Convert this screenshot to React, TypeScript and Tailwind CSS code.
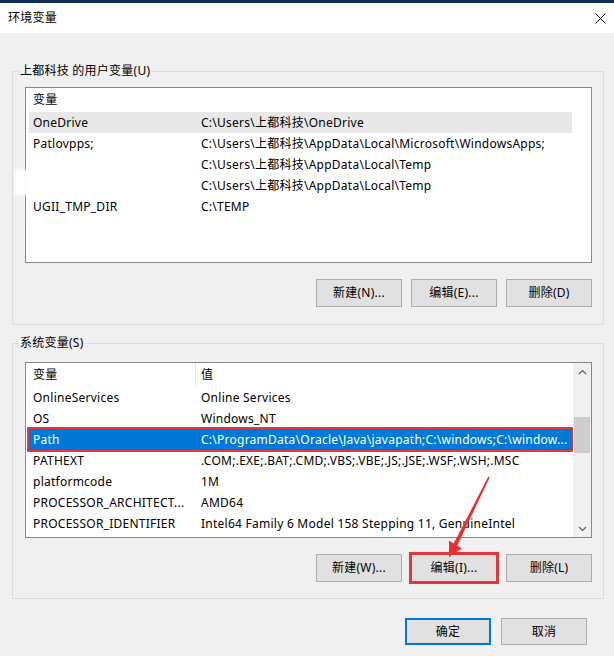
import { ReactNode } from 'react'

type Row = { name: string; value: string; hover?: boolean; selected?: boolean }

const userRows: Row[] = [
  { name: 'OneDrive', value: 'C:\\Users\\上都科技\\OneDrive', hover: true },
  { name: 'Patlovpps;', value: 'C:\\Users\\上都科技\\AppData\\Local\\Microsoft\\WindowsApps;' },
  { name: '', value: 'C:\\Users\\上都科技\\AppData\\Local\\Temp' },
  { name: '', value: 'C:\\Users\\上都科技\\AppData\\Local\\Temp' },
  { name: 'UGII_TMP_DIR', value: 'C:\\TEMP' },
]

const systemRows: Row[] = [
  { name: 'OnlineServices', value: 'Online Services' },
  { name: 'OS', value: 'Windows_NT' },
  { name: 'Path', value: 'C:\\ProgramData\\Oracle\\Java\\javapath;C:\\windows;C:\\window...', selected: true },
  { name: 'PATHEXT', value: '.COM;.EXE;.BAT;.CMD;.VBS;.VBE;.JS;.JSE;.WSF;.WSH;.MSC' },
  { name: 'platformcode', value: '1M' },
  { name: 'PROCESSOR_ARCHITECT...', value: 'AMD64' },
  { name: 'PROCESSOR_IDENTIFIER', value: 'Intel64 Family 6 Model 158 Stepping 11, GenuineIntel' },
]

function Chevron({ up }: { up?: boolean }) {
  return (
    <svg width="9" height="6" viewBox="0 0 9 6" fill="none">
      <path d={up ? 'M1 5L4.5 1.5L8 5' : 'M1 1L4.5 4.5L8 1'} stroke="#606060" strokeWidth="1.2" />
    </svg>
  )
}

function ListView({ rows, valueHeader, scrollbar }: { rows: Row[]; valueHeader?: boolean; scrollbar?: boolean }) {
  return (
    <div className="flex h-[176px] w-[567px] border border-[#828790] bg-white">
      <div className="flex w-[547px] flex-col">
        {/* header */}
        <div className="flex h-[24px] items-center">
          <div className={`flex h-full w-[170px] items-center pl-[7px] ${valueHeader ? 'border-r border-[#e5e5e5]' : ''}`}>变量</div>
          {valueHeader && <div className="pl-[5px]">值</div>}
        </div>
        {rows.map((r, i) => (
          <div
            key={i}
            className={`ml-[3px] flex h-[21px] w-[543px] items-center whitespace-nowrap ${
              r.selected ? 'bg-[#0078d7] text-white outline-2 outline-[#e0383d]' : r.hover ? 'bg-[#e8e8e8]' : ''
            }`}
          >
            <div className="w-[166px] pl-[4px]">{r.name}</div>
            <div className="pl-[6px]">{r.value}</div>
          </div>
        ))}
      </div>
      {scrollbar ? (
        <div className="flex w-[18px] flex-col bg-[#f0f0f0]">
          <div className="flex h-[17px] items-center justify-center"><Chevron up /></div>
          <div className="flex-1 px-[1px] pt-[37px]">
            <div className="h-[36px] bg-[#cdcdcd]" />
          </div>
          <div className="flex h-[17px] items-center justify-center"><Chevron /></div>
        </div>
      ) : (
        <div className="w-[18px]" />
      )}
    </div>
  )
}

function Btn({ children, red }: { children: ReactNode; red?: boolean }) {
  return (
    <button
      className={`flex h-[28px] w-[86px] items-center justify-center border border-[#adadad] bg-[#e1e1e1] ${
        red ? 'outline-[3px] outline-offset-[-1px] outline-[#e0383d]' : ''
      }`}
    >
      {children}
    </button>
  )
}

function Group({ label, children, top, legendGap, bottomPad }: { label: string; children: ReactNode; top: string; legendGap: string; bottomPad: string }) {
  return (
    <fieldset className={`ml-[12px] w-[592px] border border-[#dcdcdc] ${top}`}>
      <legend className="ml-[6px] h-[16px] px-[1px] leading-[16px]">{label}</legend>
      <div className={`flex flex-col gap-[16px] pl-[12px] pr-[11px] ${legendGap} ${bottomPad}`}>{children}</div>
    </fieldset>
  )
}

export default function App() {
  return (
    <div className="relative h-[656px] w-[614px] overflow-hidden bg-[#f0f0f0] font-['Noto_Sans','Noto_Sans_CJK_SC',sans-serif] text-[12px] tracking-[0.25px] text-black">
      <div className="h-[3px] bg-[#0f2d52]" />
      <div className="flex h-[30px] items-center justify-between bg-white pl-[8px] pr-[8px]">
        <span>环境变量</span>
        <svg width="11" height="11" viewBox="0 0 11 11">
          <path d="M0.5 0.5L10.5 10.5M10.5 0.5L0.5 10.5" stroke="#111" strokeWidth="1" />
        </svg>
      </div>

      <Group label="上都科技 的用户变量(U)" top="mt-[30px]" legendGap="pt-[8px]" bottomPad="pb-[17px]">
        <ListView rows={userRows} />
        <div className="flex justify-end gap-[9px]">
          <Btn>新建(N)...</Btn>
          <Btn>编辑(E)...</Btn>
          <Btn>删除(D)</Btn>
        </div>
      </Group>

      <Group label="系统变量(S)" top="mt-[10px]" legendGap="pt-[11px]" bottomPad="pb-[16px]">
        <ListView rows={systemRows} valueHeader scrollbar />
        <div className="flex justify-end gap-[9px]">
          <Btn>新建(W)...</Btn>
          <Btn red>编辑(I)...</Btn>
          <Btn>删除(L)</Btn>
        </div>
      </Group>

      <div className="mt-[19px] flex justify-end gap-[10px] pr-[27px]">
        <button className="flex h-[27px] w-[86px] items-center justify-center border-2 border-[#0078d7] bg-[#e1e1e1]">确定</button>
        <button className="flex h-[27px] w-[86px] items-center justify-center border border-[#adadad] bg-[#e1e1e1]">取消</button>
      </div>

      {/* smudge over the user list */}
      <div className="absolute left-[15px] top-[170px] h-[25px] w-[49px] bg-white/95 blur-[1px]" />

      {/* annotation arrow */}
      <svg className="pointer-events-none absolute left-0 top-0" width="614" height="656">
        <polygon
          points="489.7,477.4 488.3,476.6 453.7,543.6 449.1,540.5 449,557 461.9,548.5 457.3,545.4"
          fill="#e8302f"
        />
      </svg>
    </div>
  )
}
